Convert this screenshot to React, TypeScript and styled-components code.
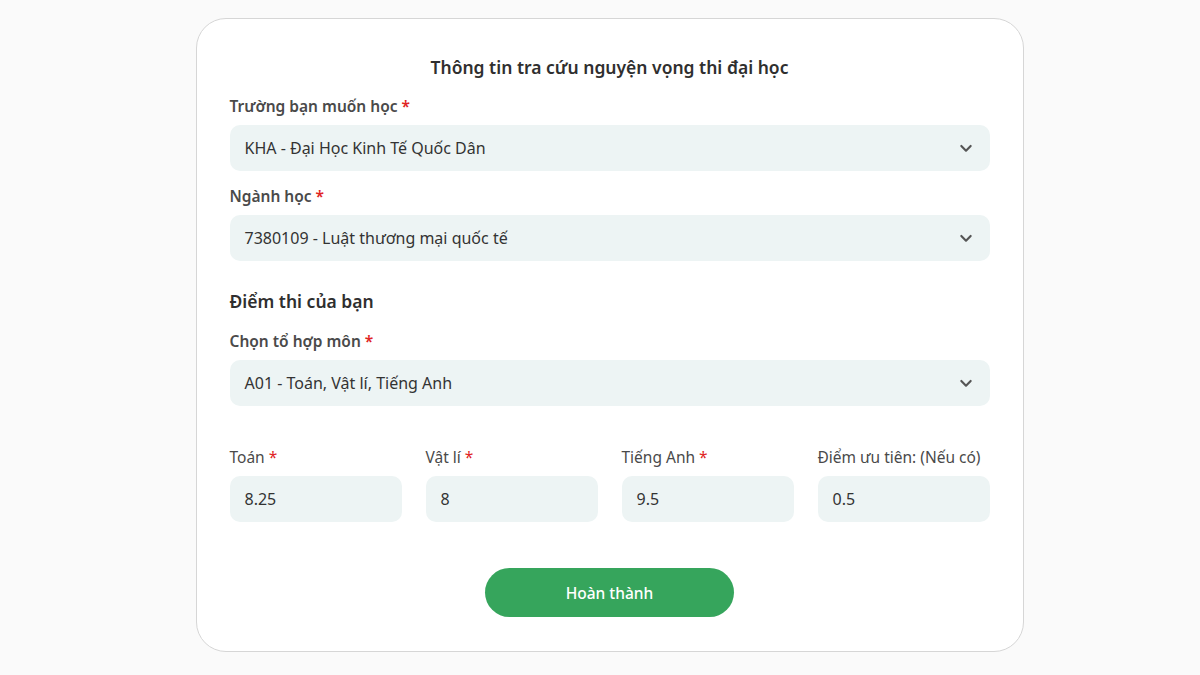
import styled, { createGlobalStyle } from "styled-components";

const GlobalStyle = createGlobalStyle`
  * { box-sizing: border-box; }
  body {
    margin: 0;
    background: #fafafa;
    font-family: "Noto Sans", "Open Sans", sans-serif;
    color: #333;
  }
`;

const Page = styled.div`
  width: 1200px;
  height: 675px;
  display: flex;
  justify-content: center;
  padding: 18px 0 0 19px;
`;

const Card = styled.form`
  width: 828px;
  height: 634px;
  background: #fff;
  border: 1px solid #d6d6d6;
  border-radius: 30px;
  padding: 36px 33px 0;
  display: flex;
  flex-direction: column;
`;

const Title = styled.h1`
  margin: 0 0 16px;
  text-align: center;
  font-size: 17.5px;
  font-weight: 600;
  color: #2f2f2f;
  line-height: 24px;
`;

const SubTitle = styled.h2`
  margin: 14px 0 17px;
  font-size: 17.5px;
  font-weight: 600;
  color: #2f2f2f;
  line-height: 24px;
`;

const Field = styled.div`
  display: flex;
  flex-direction: column;
  gap: 8px;
  margin-bottom: 14px;
`;

const Label = styled.label<{ $bold?: boolean }>`
  font-size: 15.5px;
  font-weight: ${(p) => (p.$bold ? 600 : 400)};
  color: #4a4a4a;
  line-height: 22px;
`;

const Req = styled.span`
  color: #e02424;
  margin-left: 4px;
`;

const SelectBox = styled.div`
  height: 46px;
  background: #edf4f4;
  border-radius: 10px;
  display: flex;
  align-items: center;
  justify-content: space-between;
  padding: 0 16px 0 15px;
  font-size: 16px;
  color: #333;
`;

const Chevron = () => (
  <svg width="16" height="16" viewBox="0 0 24 24" fill="none" stroke="#555" strokeWidth="3.2" strokeLinecap="round" strokeLinejoin="round">
    <path d="M5 9l7 7 7-7" />
  </svg>
);

const ScoreRow = styled.div`
  display: grid;
  grid-template-columns: repeat(4, 1fr);
  column-gap: 24px;
  margin-top: 26px;
`;

const Input = styled.div`
  height: 46px;
  background: #edf4f4;
  border-radius: 10px;
  display: flex;
  align-items: center;
  padding: 0 15px;
  font-size: 16px;
  color: #333;
`;

const Submit = styled.button`
  align-self: center;
  margin-top: 32px;
  width: 249px;
  height: 49px;
  border: none;
  border-radius: 25px;
  background: #36a55c;
  color: #fff;
  font-family: inherit;
  font-size: 15.5px;
  font-weight: 500;
`;

const scores = [
  { label: "Toán", value: "8.25", req: true },
  { label: "Vật lí", value: "8", req: true },
  { label: "Tiếng Anh", value: "9.5", req: true },
  { label: "Điểm ưu tiên: (Nếu có)", value: "0.5", req: false },
];

export default function App() {
  return (
    <>
      <GlobalStyle />
      <Page>
        <Card>
          <Title>Thông tin tra cứu nguyện vọng thi đại học</Title>
          <Field>
            <Label $bold>
              Trường bạn muốn học<Req>*</Req>
            </Label>
            <SelectBox>
              KHA - Đại Học Kinh Tế Quốc Dân
              <Chevron />
            </SelectBox>
          </Field>
          <Field>
            <Label $bold>
              Ngành học<Req>*</Req>
            </Label>
            <SelectBox>
              7380109 - Luật thương mại quốc tế
              <Chevron />
            </SelectBox>
          </Field>
          <SubTitle>Điểm thi của bạn</SubTitle>
          <Field>
            <Label $bold>
              Chọn tổ hợp môn<Req>*</Req>
            </Label>
            <SelectBox>
              A01 - Toán, Vật lí, Tiếng Anh
              <Chevron />
            </SelectBox>
          </Field>
          <ScoreRow>
            {scores.map((s) => (
              <Field key={s.label}>
                <Label>
                  {s.label}
                  {s.req && <Req>*</Req>}
                </Label>
                <Input>{s.value}</Input>
              </Field>
            ))}
          </ScoreRow>
          <Submit type="button">Hoàn thành</Submit>
        </Card>
      </Page>
    </>
  );
}
